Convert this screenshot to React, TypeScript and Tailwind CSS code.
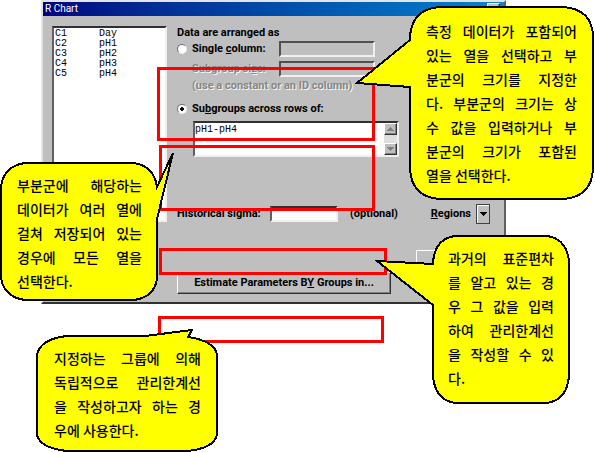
import type { ReactNode } from 'react';

const columns = [
  ['C1', 'Day'],
  ['C2', 'pH1'],
  ['C3', 'pH2'],
  ['C4', 'pH3'],
  ['C5', 'pH4'],
];

const sunken = 'border-t-2 border-l-2 border-b-2 border-r-2 border-t-[#303030] border-l-[#606060] border-b-[#f0f0f0] border-r-[#f0f0f0]';
const sunkenMuted = 'border-t-2 border-l-2 border-b-2 border-r-2 border-t-[#505050] border-l-[#505050] border-b-[#f0f0f0] border-r-[#f0f0f0]';
const raised = 'border border-t-white border-l-white border-b-[#303030] border-r-[#303030] shadow-[inset_-1px_-1px_0_#808080]';

function Highlight({ place }: { place: string }) {
  return <div aria-hidden="true" className={`pointer-events-none absolute border-3 border-[#ff0000] ${place}`} />;
}

function Callout({ place, shape, box, lines }: { place: string; shape: string; box: string; lines: string[] }) {
  return (
    <aside className={`absolute ${place}`}>
      <svg className="absolute inset-0 size-full overflow-visible" viewBox={box} aria-hidden="true" shapeRendering="crispEdges">
        <path d={shape} fill="#ffff00" stroke="#000" strokeWidth="2" strokeLinejoin="miter" />
      </svg>
      <p className="relative font-['Noto_Sans_CJK_KR',sans-serif] text-[14px] leading-6 font-medium text-black">
        {lines.map((line, i) => (
          <span
            key={line}
            className={`block whitespace-nowrap ${i < lines.length - 1 ? '[text-align-last:justify]' : ''}`}
          >
            {line}{' '}
          </span>
        ))}
      </p>
    </aside>
  );
}

function Arrow({ up, muted }: { up?: boolean; muted?: boolean }) {
  return (
    <svg width="7" height="4" viewBox="0 0 7 4" aria-hidden="true" shapeRendering="crispEdges">
      <path d={up ? 'M0 4h7L3.5 0z' : 'M0 0h7L3.5 4z'} fill={muted ? '#808080' : '#000'} />
    </svg>
  );
}

function Radio({ id, checked }: { id: string; checked?: boolean }) {
  return (
    <input
      type="radio"
      name="arrangement"
      id={id}
      defaultChecked={checked}
      className="size-[10px] shrink-0 appearance-none rounded-full border border-t-[#707070] border-l-[#707070] border-r-[#eeeeee] border-b-[#eeeeee] bg-white checked:bg-[radial-gradient(circle,#000_0_2px,#fff_2px)]"
    />
  );
}

function Dialog({ children }: { children: ReactNode }) {
  return (
    <section className="mr-[89px] ml-[41px] border-2 border-t-[#e4e4e4] border-l-[#e4e4e4] border-r-[#606060] border-b-[#303030] bg-[#bfbfbf] font-[Roboto,'Liberation_Sans',sans-serif] text-[11px] leading-[14px] font-bold text-black">
      <header className="flex h-[14px] items-center justify-between bg-linear-to-r from-[#000080] to-[#1084d0] pr-1 pl-[2px] text-white">
        <h1 className="text-[10px] font-normal">R Chart</h1>
        <button type="button" aria-label="Close" className={`h-3 w-[13px] bg-[#bfbfbf] ${raised}`} />
      </header>
      {children}
    </section>
  );
}

export default function App() {
  return (
    <main className="relative min-h-[452px] w-full max-w-[595px] overflow-hidden bg-white">
      <Dialog>
        <form className="px-[9px] pt-[10px] pb-2">
          <div className="flex items-start gap-[10px]">
            <ul className={`h-[196px] w-[115px] shrink-0 bg-white pt-px pl-px font-['Liberation_Mono',monospace] text-[10px] leading-[10px] font-normal ${sunken}`}>
              {columns.map(([id, name]) => (
                <li key={id} className="flex">
                  <span className="w-11">{id}</span>
                  <span>{name}</span>
                </li>
              ))}
            </ul>

            <div className="min-w-0 flex-1">
              <fieldset>
                <legend className="h-[15px]">Data are arranged as</legend>
                <div className="flex h-4 items-center gap-[5px]">
                  <Radio id="single" />
                  <label htmlFor="single" className="w-[82px]">
                    Single <u>c</u>olumn:
                  </label>
                  <input aria-label="Single column" disabled className={`h-4 w-[96px] bg-[#bfbfbf] ${sunkenMuted}`} />
                </div>
                <div className="mt-1 flex h-4 items-center pl-[15px] text-[#868686] [text-shadow:1px_1px_0_#f4f4f4]">
                  <label htmlFor="size" className="w-[87px]">
                    Subgroup si<u>z</u>e:
                  </label>
                  <input id="size" disabled className={`h-4 w-[96px] bg-[#bfbfbf] ${sunkenMuted}`} />
                </div>
                <p className="mt-[2px] pl-[15px] text-[#868686] [text-shadow:1px_1px_0_#f4f4f4]">(use a constant or an ID column)</p>
                <div className="mt-2 flex h-4 items-center gap-[5px]">
                  <Radio id="across" checked />
                  <label htmlFor="across">
                    Su<u>b</u>groups across rows of:
                  </label>
                </div>
                <div className={`mt-1 ml-4 flex h-9 w-[206px] bg-white ${sunken}`}>
                  <textarea
                    aria-label="Subgroup columns"
                    defaultValue="pH1-pH4"
                    className="min-w-0 flex-1 resize-none overflow-hidden pt-px font-['Liberation_Mono',monospace] text-[10px] leading-3 font-normal outline-none"
                  />
                  <div className="flex w-[13px] flex-col justify-between bg-[#dedede]">
                    <button type="button" aria-label="Scroll up" className={`flex h-3 items-center justify-center bg-[#bfbfbf] ${raised}`}>
                      <Arrow up muted />
                    </button>
                    <button type="button" aria-label="Scroll down" className={`flex h-3 items-center justify-center bg-[#bfbfbf] ${raised}`}>
                      <Arrow muted />
                    </button>
                  </div>
                </div>
              </fieldset>

              <div className="mt-[47px] flex h-5 items-center">
                <label htmlFor="sigma" className="w-[93px]">
                  Historical sigma:
                </label>
                <input id="sigma" className={`h-4 w-[68px] bg-white ${sunken}`} />
                <span className="ml-3">(optional)</span>
                <label htmlFor="regions" className="mr-[5px] ml-auto">
                  <u>R</u>egions
                </label>
                <button id="regions" type="button" className="mr-[5px] flex h-5 w-[14px] items-center justify-center border border-[#404040] bg-[#bfbfbf] shadow-[inset_1px_1px_0_#fff]">
                  <Arrow />
                </button>
              </div>
            </div>
          </div>

          <div className="mt-[26px] flex items-start justify-between pr-[5px] pl-[125px]">
            <button type="button" className={`mt-[22px] h-[22px] w-[214px] ${raised}`}>
              Estimate Parameters B<u>Y</u> Groups in...
            </button>
            <button type="button" aria-label="Options" className={`h-[22px] w-[74px] ${raised}`} />
          </div>
        </form>
      </Dialog>

      <Highlight place="left-[157px] top-[67px] h-[74px] w-[218px]" />
      <Highlight place="left-[159px] top-[145px] h-[66px] w-[216px]" />
      <Highlight place="left-[159px] top-[248px] h-[27px] w-[228px]" />
      <Highlight place="left-[158px] top-[316px] h-[27px] w-[226px]" />

      <Callout
        place="left-[410px] top-[7px] h-[192px] w-[183px] pt-3 pr-4 pl-4"
        box="410 7 183 192"
        shape="M440 7H563Q593 9 593 38V168Q592 197 563 199H440Q411 197 410 168V87L357 83L410 40Q410 9 440 7Z"
        lines={['측정 데이터가 포함되어', '있는 열을 선택하고 부', '분군의 크기를 지정한', '다. 부분군의 크기는 상', '수 값을 입력하거나 부', '분군의 크기가 포함된', '열을 선택한다.']}
      />
      <Callout
        place="left-[1px] top-[163px] h-[137px] w-[156px] pt-[10px] pr-[15px] pl-4"
        box="1 163 156 137"
        shape="M25 163H134Q154 166 157 187L173 153L157 219V278Q155 297 134 300H25Q4 297 1 278V186Q4 166 25 163Z"
        lines={['부분군에 해당하는', '데이터가 여러 열에', '걸쳐 저장되어 있는', '경우에 모든 열을', '선택한다.']}
      />
      <Callout
        place="left-[433px] top-[236px] h-[167px] w-[136px] pt-[10px] pr-[15px] pl-[15px]"
        box="433 236 136 167"
        shape="M455 236H547Q567 239 569 262V376Q567 400 547 403H455Q435 400 433 376V305L377 261L433 264Q434 239 455 236Z"
        lines={['과거의 표준편차', '를 알고 있는 경', '우 그 값을 입력', '하여 관리한계선', '을 작성할 수 있', '다.']}
      />
      <Callout
        place="left-[37px] top-[336px] h-[115px] w-[180px] pt-[10px] pr-4 pl-[17px]"
        box="37 336 180 115"
        shape="M67 336H145L192 330L188 337Q215 341 217 355V435Q214 448 188 451H67Q40 448 37 435V355Q40 339 67 336Z"
        lines={['지정하는 그룹에 의해', '독립적으로 관리한계선', '을 작성하고자 하는 경', '우에 사용한다.']}
      />
    </main>
  );
}
